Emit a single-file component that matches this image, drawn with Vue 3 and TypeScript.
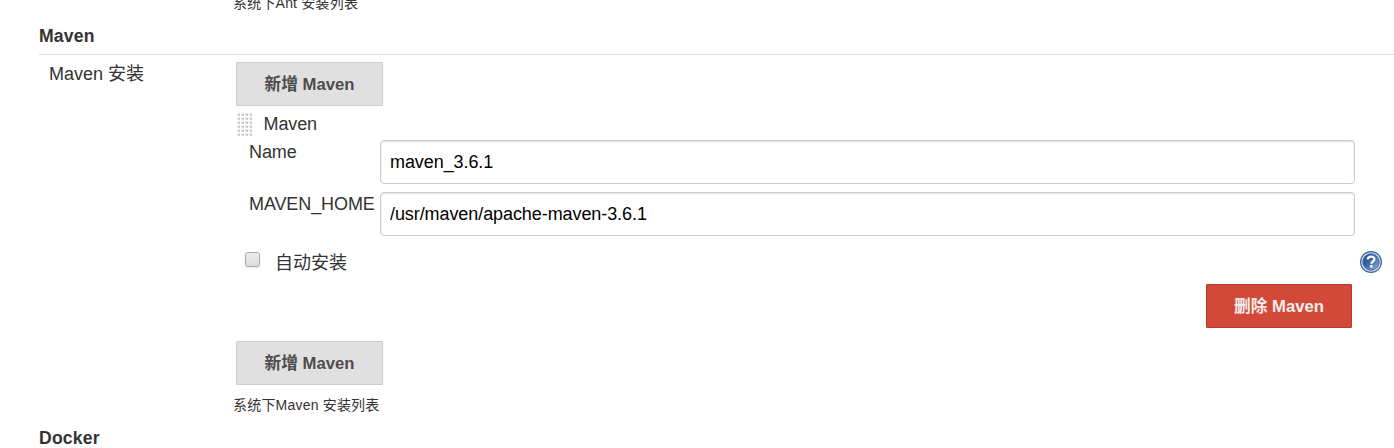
<script setup lang="ts">
import { ref } from 'vue'

interface Field { label: string; value: string }

const fields = ref<Field[]>([
  { label: 'Name', value: 'maven_3.6.1' },
  { label: 'MAVEN_HOME', value: '/usr/maven/apache-maven-3.6.1' },
])
const autoInstall = ref(false)
const dots = Array.from({ length: 24 }, (_, i) => ({ x: (i % 4) * 4, y: Math.floor(i / 4) * 4 }))
</script>

<template>
  <main class="page">
    <p class="caption caption-top">系统下Ant 安装列表</p>
    <h2 class="heading">Maven</h2>
    <section class="section">
      <div class="section-label">Maven 安装</div>
      <div class="section-body">
        <button class="btn" type="button">新增 Maven</button>
        <div class="tool-head">
          <svg class="handle" width="16" height="24" viewBox="0 0 16 24" shape-rendering="crispEdges">
            <g v-for="(d, i) in dots" :key="i">
              <rect :x="d.x" :y="d.y" width="3" height="3" fill="#ebebeb" />
              <rect :x="d.x + 1" :y="d.y + 1" width="2" height="2" fill="#d2d2d2" />
              <rect :x="d.x + 2" :y="d.y + 1" width="1" height="1" fill="#bcbcbc" />
            </g>
          </svg>
          <span>Maven</span>
        </div>
        <div v-for="f in fields" :key="f.label" class="field">
          <label class="field-label">{{ f.label }}</label>
          <input v-model="f.value" class="field-input" type="text" spellcheck="false" />
        </div>
        <div class="auto">
          <input v-model="autoInstall" class="check" type="checkbox" />
          <span class="auto-label">自动安装</span>
          <svg class="help" width="22" height="22" viewBox="0 0 22 22">
            <defs>
              <linearGradient id="helpFill" x1="0" y1="0" x2="1" y2="1">
                <stop offset="0" stop-color="#204a87" />
                <stop offset="0.45" stop-color="#3a66a5" />
                <stop offset="1" stop-color="#9ab8de" />
              </linearGradient>
            </defs>
            <circle cx="11" cy="11" r="10.4" fill="#d5e0ee" stroke="#3c649d" stroke-width="1.2" />
            <circle cx="11" cy="11" r="8.2" fill="url(#helpFill)" stroke="#3c649d" stroke-width="0.9" />
            <path d="M7.7 8.4C7.9 6.5 9.2 5.7 11 5.7c2 0 3.4 1 3.4 2.6 0 2.1-3 2.2-3 4.5" fill="none" stroke="#fff" stroke-width="2.3" />
            <rect x="10.1" y="14.2" width="2.5" height="2.4" fill="#fff" />
          </svg>
        </div>
        <div class="delete-row">
          <button class="btn btn-danger" type="button">删除 Maven</button>
        </div>
        <button class="btn" type="button">新增 Maven</button>
        <p class="caption">系统下Maven 安装列表</p>
      </div>
    </section>
    <h2 class="heading heading-next">Docker</h2>
  </main>
</template>

<style>
body { background: #fff; overflow: hidden; }
</style>

<style scoped>
.page {
  box-sizing: border-box;
  height: 448px;
  overflow: hidden;
  padding-left: 39px;
  color: #333;
  font: 18px/20px "Liberation Sans", "Noto Sans CJK SC", sans-serif;
}
.caption {
  margin: 10px 0 0 -3px;
  font-size: 14px;
  line-height: 20px;
  letter-spacing: 0.2px;
}
.caption-top { margin: -7px 0 0 194px; }
.heading {
  box-sizing: border-box;
  height: 42px;
  margin: 0;
  padding-top: 13px;
  border-bottom: 1px solid #ddd;
  font-size: 17.6px;
  line-height: 20px;
  letter-spacing: 0.2px;
}
.section { display: flex; height: 360px; }
.section-label { width: 197px; padding: 9px 0 0 10px; box-sizing: border-box; }
.section-body { flex: 1; padding-top: 7px; }
.btn {
  display: block;
  box-sizing: border-box;
  width: 147px;
  height: 44px;
  padding: 2px 0 0;
  border: 1px solid #ccc;
  border-radius: 1px;
  background: #e0e0e0;
  color: #4d4d4d;
  font: bold 16.7px/24px "Liberation Sans", "Noto Sans CJK SC", sans-serif;
}
.tool-head { display: flex; height: 34px; gap: 10.5px; padding: 7px 0 0 1px; box-sizing: border-box; }
.tool-head span { line-height: 22px; letter-spacing: -0.1px; }
.field { display: flex; height: 52px; padding-left: 13px; }
.field-label { width: 131px; line-height: 22px; padding-top: 1px; letter-spacing: -0.1px; }
.field-input {
  box-sizing: border-box;
  width: 975px;
  height: 44px;
  margin: 0;
  padding: 0 9px;
  border: 1px solid #ccc;
  border-radius: 4px;
  outline: none;
  box-shadow: inset 0 1px 2px rgba(0, 0, 0, 0.12);
  color: #000;
  font: 18px "Liberation Sans", sans-serif;
  letter-spacing: -0.08px;
}
.auto { display: flex; height: 40px; padding: 7px 12px 0 9px; box-sizing: border-box; }
.check {
  appearance: none;
  box-sizing: border-box;
  width: 15px;
  height: 15px;
  margin: 1px 15px 0 0;
  border: 1px solid #aaa;
  border-radius: 3px;
  background: linear-gradient(#ededed, #dcdcdc);
  box-shadow: 0 1px 2px rgba(0, 0, 0, 0.1);
}
.auto-label { padding-top: 2px; }
.help { margin-left: auto; }
.delete-row { display: flex; justify-content: flex-end; height: 57px; padding-right: 42px; }
.btn-danger { width: 146px; border-color: #b93a2b; background: #d24939; color: #f2eeee; }
</style>
